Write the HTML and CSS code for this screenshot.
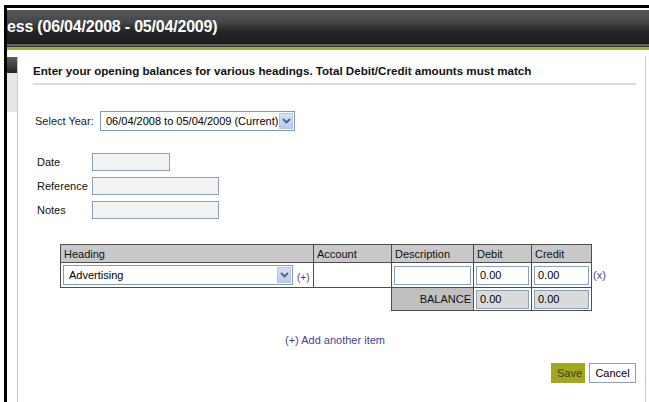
FILE: index.html
```html
<!DOCTYPE html>
<html>
<head>
<meta charset="utf-8">
<title>Opening Balances</title>
<link rel="stylesheet" href="styles.css">
</head>
<body>
<div class="window">
  <div class="titlebar">
    <h1 class="title">ess (06/04/2008 - 05/04/2009)</h1>
  </div>
  <div class="rule-gray"></div>
  <div class="rule-dark"></div>
  <div class="rule-olive"></div>

  <div class="main">
    <div class="sidebar">
      <div class="side-tab"></div>
      <div class="side-light"></div>
    </div>

    <div class="panel">
      <p class="intro">Enter your opening balances for various headings. Total Debit/Credit amounts must match</p>
      <div class="divider"></div>

      <div class="year-row">
        <span class="year-label">Select Year:</span>
        <div class="dropdown year-select">
          <span class="dropdown-text">06/04/2008 to 05/04/2009 (Current)</span>
          <span class="dropdown-btn">
            <svg width="9" height="6" viewBox="0 0 9 6"><path d="M1 1 L4.5 4.5 L8 1" fill="none" stroke="#4d6185" stroke-width="1.8"/></svg>
          </span>
        </div>
      </div>

      <div class="fields">
        <div class="field-row">
          <label class="field-label">Date</label>
          <input class="field-input w-short" type="text">
        </div>
        <div class="field-row">
          <label class="field-label">Reference</label>
          <input class="field-input w-long" type="text">
        </div>
        <div class="field-row">
          <label class="field-label">Notes</label>
          <input class="field-input w-long" type="text">
        </div>
      </div>

      <div class="table-wrap">
        <table class="items">
          <colgroup>
            <col class="c-heading">
            <col class="c-account">
            <col class="c-desc">
            <col class="c-debit">
            <col class="c-credit">
          </colgroup>
          <thead>
            <tr>
              <th>Heading</th>
              <th>Account</th>
              <th>Description</th>
              <th>Debit</th>
              <th>Credit</th>
            </tr>
          </thead>
          <tbody>
            <tr class="item-row">
              <td>
                <div class="heading-cell">
                  <div class="dropdown heading-select">
                    <span class="dropdown-text">Advertising</span>
                    <span class="dropdown-btn">
                      <svg width="9" height="6" viewBox="0 0 9 6"><path d="M1 1 L4.5 4.5 L8 1" fill="none" stroke="#4d6185" stroke-width="1.8"/></svg>
                    </span>
                  </div>
                  <a class="link small-link">(+)</a>
                </div>
              </td>
              <td></td>
              <td><input class="cell-input" type="text"></td>
              <td><input class="cell-input" type="text" value="0.00"></td>
              <td class="last-cell">
                <input class="cell-input" type="text" value="0.00">
                <a class="link remove-link">(x)</a>
              </td>
            </tr>
            <tr class="balance-row">
              <td class="blank" colspan="2"></td>
              <td class="balance-label">BALANCE</td>
              <td class="balance-cell"><input class="cell-input readonly" type="text" value="0.00" readonly></td>
              <td class="balance-cell"><input class="cell-input readonly" type="text" value="0.00" readonly></td>
            </tr>
          </tbody>
        </table>
      </div>

      <div class="add-row">
        <a class="link add-link">(+) Add another item</a>
      </div>

      <div class="actions">
        <button class="btn btn-save">Save</button>
        <button class="btn btn-cancel">Cancel</button>
      </div>
    </div>
  </div>
</div>
</body>
</html>
```

FILE: styles.css
```css
html, body {
  margin: 0;
  padding: 0;
  background: #fff;
  font-family: "Liberation Sans", Arial, sans-serif;
  font-size: 11px;
  color: #111;
}

.window {
  margin: 5px 0 0 4px;
  border-top: 3px solid #000;
  border-left: 3px solid #000;
  padding-top: 2px;
  height: 397px;
  box-sizing: border-box;
  overflow: hidden;
  display: flex;
  flex-direction: column;
}

/* dark title bar */
.titlebar {
  height: 34px;
  flex: none;
  background: linear-gradient(#53565a 0%, #45484b 35%, #262626 60%, #1c1c1c 100%);
  display: flex;
  align-items: center;
}

.title {
  margin: 0;
  font-size: 16px;
  font-weight: bold;
  color: #fff;
  letter-spacing: -0.2px;
}

.rule-gray { height: 2px; flex: none; background: #646464; }
.rule-dark { height: 1px; flex: none; background: #3b3b3b; }
.rule-olive { height: 3px; flex: none; background: #a2ad28; }

.main {
  display: flex;
  flex: 1;
}

.sidebar {
  width: 10px;
  margin-top: 7px;
  border-right: 1px solid #c9c9c9;
}

.side-tab {
  height: 16px;
  background: linear-gradient(#5a5c5e, #242424);
}

.side-light {
  height: 39px;
  background: #e6e6e6;
}

.panel {
  flex: 1;
  margin-top: 7px;
  border-right: 1px solid #c9c9c9;
  padding: 7px 9px 0 15px;
  margin-right: 3px;
}

.intro {
  margin: 0;
  font-weight: bold;
  font-size: 11.6px;
  line-height: 14px;
  color: #111;
}

.divider {
  margin-top: 5px;
  border-top: 2px solid #dcdcdc;
}

.year-row {
  display: flex;
  align-items: center;
  margin-top: 26px;
  padding-left: 2px;
}

.year-label {
  width: 65px;
  color: #222;
}

.dropdown {
  display: flex;
  align-items: center;
  height: 20px;
  box-sizing: border-box;
  border: 1px solid #7f9db9;
  background: #fff;
  padding: 1px;
}

.dropdown-text {
  flex: 1;
  padding-left: 4px;
  color: #000;
  white-space: nowrap;
}

.dropdown-btn {
  width: 14px;
  height: 16px;
  background: linear-gradient(#d4e0f7, #b9cbef);
  border: 1px solid #b5c6e6;
  box-sizing: border-box;
  display: flex;
  align-items: center;
  justify-content: center;
}

.year-select {
  width: 195px;
}

.fields {
  margin-top: 22px;
  display: flex;
  flex-direction: column;
  gap: 6px;
}

.field-row {
  display: flex;
  align-items: center;
}

.field-label {
  width: 55px;
  padding-left: 4px;
  color: #111;
}

.field-input {
  height: 18px;
  box-sizing: border-box;
  border: 1px solid #8aa0bb;
  background: #f3f3f3;
  margin: 0;
  padding: 0 3px;
  font: inherit;
}

.w-short { width: 78px; }
.w-long { width: 127px; }

.table-wrap {
  margin-top: 25px;
  padding-left: 27px;
}

.items {
  border-collapse: collapse;
  table-layout: fixed;
  width: 531px;
}

.c-heading { width: 253px; }
.c-account { width: 78px; }
.c-desc { width: 82px; }
.c-debit { width: 58px; }
.c-credit { width: 60px; }

.items th {
  background: #c9c9c9;
  border: 1px solid #4d4d4d;
  height: 17px;
  padding: 0 3px;
  text-align: left;
  font-weight: normal;
  font-size: 11px;
  color: #111;
}

.item-row td {
  border: 1px solid #4d4d4d;
  height: 24px;
  padding: 0 2px;
  vertical-align: middle;
}

.heading-cell {
  display: flex;
  align-items: center;
}

.heading-select {
  width: 230px;
  height: 20px;
}

.link {
  color: #4b3b98;
  cursor: pointer;
}

.small-link {
  margin-left: 4px;
  font-size: 10px;
  padding-top: 4px;
}

.cell-input {
  width: 100%;
  height: 19px;
  box-sizing: border-box;
  border: 1px solid #8aa0bb;
  background: #fff;
  margin: 0;
  padding: 0 3px;
  font: inherit;
  color: #000;
}

.last-cell {
  position: relative;
}

.remove-link {
  position: absolute;
  left: 61px;
  top: 6px;
  font-size: 11px;
}

.balance-row td {
  height: 22px;
  padding: 0 2px;
  vertical-align: middle;
}

.balance-row .blank {
  border: none;
  border-top: 1px solid #4d4d4d;
}

.balance-label {
  background: #c0c0c0;
  border: 1px solid #4d4d4d;
  text-align: right;
  color: #111;
}

.balance-cell {
  border: 1px solid #4d4d4d;
}

.cell-input.readonly {
  background: #dadada;
}

.add-row {
  margin-top: 23px;
  padding-left: 252px;
}

.add-link {
  font-size: 11px;
}

.actions {
  margin-top: 17px;
  display: flex;
  justify-content: flex-end;
  gap: 4px;
}

.btn {
  height: 20px;
  font: inherit;
  font-size: 11px;
  margin: 0;
  padding: 0 5px;
  box-sizing: border-box;
}

.btn-save {
  width: 34px;
  background: #a2a81e;
  border: 1px solid #a2a81e;
  color: #3d3d2a;
}

.btn-cancel {
  width: 47px;
  background: #fff;
  border: 1px solid #8fa0b5;
  color: #000;
}
```
